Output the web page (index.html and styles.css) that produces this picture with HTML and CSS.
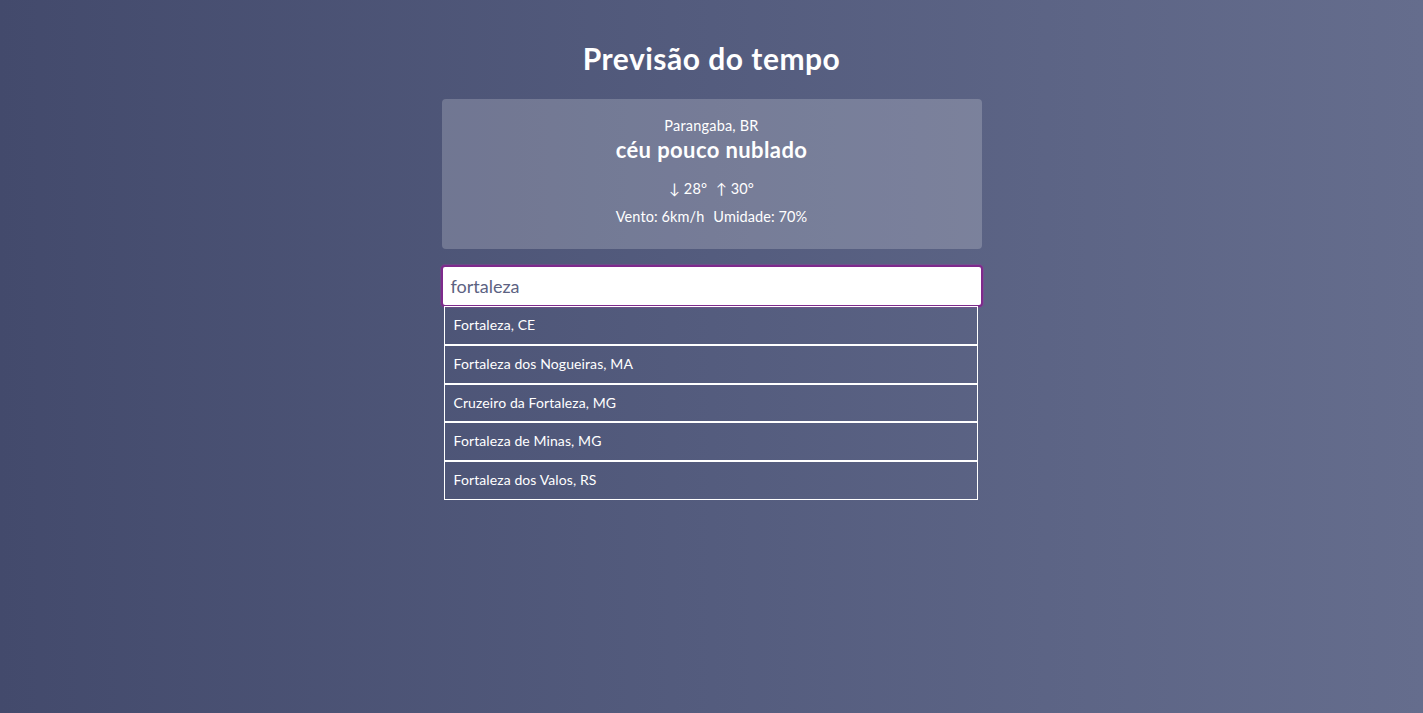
FILE: index.html
```html
<!DOCTYPE html>
<html lang="pt-BR">
<head>
<meta charset="utf-8">
<title>Previsão do tempo</title>
<link rel="stylesheet" href="styles.css">
</head>
<body>
<main class="app">
  <h1 class="title">Previsão do tempo</h1>
  <section class="card">
    <div class="city">Parangaba, BR</div>
    <div class="desc">céu pouco nublado</div>
    <div class="temps"><span>↓ 28°</span><span>↑ 30°</span></div>
    <div class="extra"><span>Vento: 6km/h</span><span>Umidade: 70%</span></div>
  </section>
  <div class="search">
    <div class="input">fortaleza</div>
    <ul class="results">
      <li>Fortaleza, CE</li>
      <li>Fortaleza dos Nogueiras, MA</li>
      <li>Cruzeiro da Fortaleza, MG</li>
      <li>Fortaleza de Minas, MG</li>
      <li>Fortaleza dos Valos, RS</li>
    </ul>
  </div>
</main>
</body>
</html>
```
FILE: styles.css
```css
html, body {
  margin: 0;
  height: 100%;
}
body {
  background: linear-gradient(to right, #434a6c 0%, #545c7e 50%, #656d8d 100%);
  font-family: Lato, "Noto Sans", sans-serif;
  color: #fff;
}
.app {
  width: 540px;
  margin: 0 auto;
  padding-top: 41px;
  display: flex;
  flex-direction: column;
}
.title {
  margin: 0 0 23px;
  text-align: center;
  font-size: 30px;
  font-weight: 700;
  line-height: 35px;
  letter-spacing: 0.5px;
}
.card {
  height: 150px;
  box-sizing: border-box;
  background: rgba(255, 255, 255, 0.2);
  border-radius: 4px;
  padding-top: 17px;
  text-align: center;
  display: flex;
  flex-direction: column;
  align-items: center;
}
.city {
  font-size: 14.5px;
  line-height: 20px;
  font-weight: 400;
  letter-spacing: 0.2px;
}
.desc {
  font-size: 22px;
  font-weight: 700;
  line-height: 28px;
  letter-spacing: 0.4px;
  margin-bottom: 15px;
}
.temps, .extra {
  font-size: 14.5px;
  font-weight: 400;
  line-height: 20px;
  letter-spacing: 0.1px;
  display: flex;
  gap: 9px;
}
.temps {
  margin-bottom: 8px;
}
.search {
  margin-top: 16px;
  display: flex;
  flex-direction: column;
}
.input {
  height: 42px;
  box-sizing: border-box;
  margin: 0 -1px;
  background: #fff;
  border: 2px solid #7e2a8c;
  box-shadow: 0 0 0 1px rgba(150, 60, 160, 0.35);
  border-radius: 4px;
  padding: 0 8px;
  display: flex;
  align-items: center;
  color: #5c6282;
  font-size: 18px;
}
.results {
  list-style: none;
  margin: -1px 4px 0 2px;
  padding: 0;
}
.results li {
  border: 1px solid #fff;
  padding: 9px 9px;
  font-size: 14px;
  line-height: 18.8px;
  font-weight: 400;
  letter-spacing: 0.1px;
}
```
